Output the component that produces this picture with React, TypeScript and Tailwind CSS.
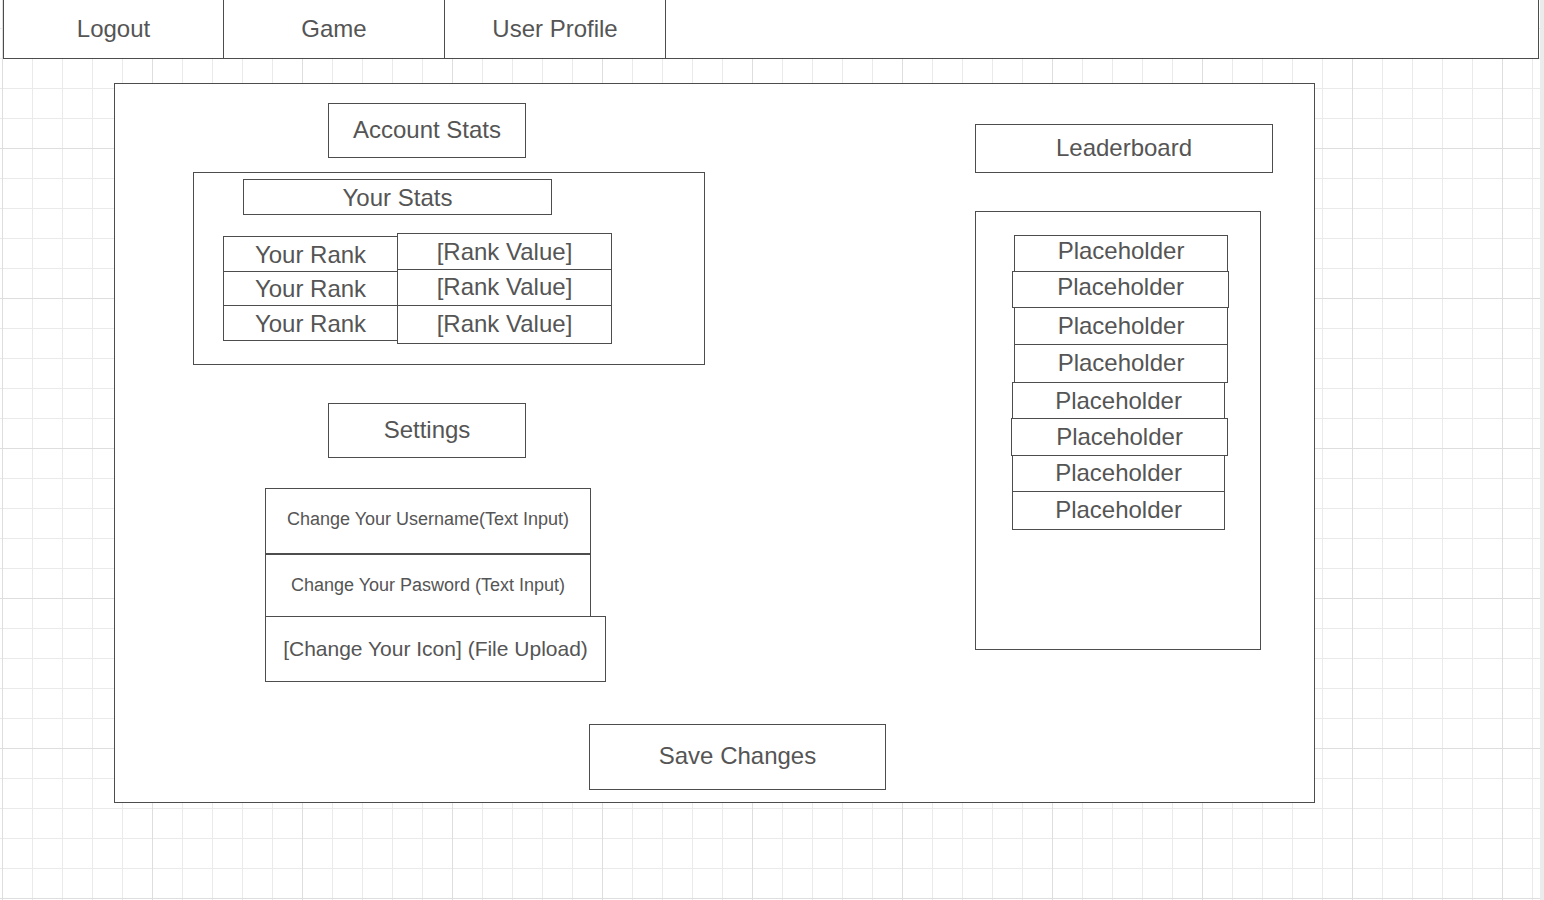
import React from 'react';

const navItems = [
    { label: 'Logout', w: 'w-[220px]' },
    { label: 'Game', w: 'w-[221px]' },
    { label: 'User Profile', w: 'w-[221px]' },
];

// each row: left offset inside the list box, width, height; rows share borders
const leaderRows = [
    'ml-[38px] w-[214px] h-[37px] pb-[5px]',
    'ml-[36px] w-[217px] h-[37px] -mt-px pb-[5px]',
    'ml-[38px] w-[214px] h-[38px] -mt-px pb-[1px]',
    'ml-[38px] w-[214px] h-[39px] -mt-px pb-[1px]',
    'ml-[36px] w-[213px] h-[37px] -mt-px',
    'ml-[35px] w-[217px] h-[38px] -mt-px pb-[1px]',
    'ml-[36px] w-[213px] h-[37px] -mt-px pb-[1px]',
    'ml-[36px] w-[213px] h-[39px] -mt-px pb-[1px]',
];

const box = 'flex items-center justify-center border border-[#4d4d4d] bg-white';

const App: React.FC = () => {
    return (
        <div className="flex w-[1544px] h-[900px] bg-[#ebebeb] font-['Liberation_Sans',Arial,sans-serif] text-[#555555] text-[24px] leading-none">
            {/* draw.io style canvas */}
            <div className="w-[1540px] h-[900px] bg-white bg-[linear-gradient(to_right,#dedede_1px,transparent_1px),linear-gradient(to_bottom,#dedede_1px,transparent_1px),linear-gradient(to_right,#eaeaea_1px,transparent_1px),linear-gradient(to_bottom,#eaeaea_1px,transparent_1px)] bg-[size:150px_150px,150px_150px,30px_30px,30px_30px] bg-[position:2px_-2px]">

                {/* Top nav */}
                <div className="ml-[3px] flex w-[1536px] h-[59px] border-x border-b border-[#4d4d4d] bg-white">
                    {navItems.map(item => (
                        <div key={item.label} className={`flex items-center justify-center border-r border-[#4d4d4d] ${item.w}`}>
                            {item.label}
                        </div>
                    ))}
                </div>

                {/* Main panel */}
                <div className="ml-[114px] mt-[24px] flex flex-col w-[1201px] h-[720px] border border-[#4d4d4d] bg-white">
                    <div className="flex">
                        {/* Left column */}
                        <div className="flex flex-col w-[620px]">
                            <div className={`${box} ml-[213px] mt-[19px] w-[198px] h-[55px] pb-[2px]`}>Account Stats</div>

                            <div className="ml-[78px] mt-[14px] flex flex-col w-[512px] h-[193px] border border-[#4d4d4d]">
                                <div className={`${box} ml-[49px] mt-[6px] w-[309px] h-[36px] pt-[2px]`}>Your Stats</div>

                                <div className="ml-[29px] mt-[18px] flex items-start">
                                    <div className="mt-[3px] flex flex-col w-[175px] border border-[#4d4d4d]">
                                        <div className="flex items-center justify-center h-[34px] pt-[2px]">Your Rank</div>
                                        <div className="flex items-center justify-center h-[34px] border-t border-[#4d4d4d]">Your Rank</div>
                                        <div className="flex items-center justify-center h-[35px] border-t border-[#4d4d4d] pt-[2px]">Your Rank</div>
                                    </div>
                                    <div className="-ml-px flex flex-col w-[215px] border border-[#4d4d4d]">
                                        <div className="flex items-center justify-center h-[35px]">[Rank Value]</div>
                                        <div className="flex items-center justify-center h-[36px] border-t border-[#4d4d4d] pb-[2px]">[Rank Value]</div>
                                        <div className="flex items-center justify-center h-[38px] border-t border-[#4d4d4d] pb-[2px]">[Rank Value]</div>
                                    </div>
                                </div>
                            </div>

                            <div className={`${box} ml-[213px] mt-[38px] w-[198px] h-[55px] pb-[2px]`}>Settings</div>

                            <div className={`${box} ml-[150px] mt-[30px] w-[326px] h-[66px] text-[18px] pb-[4px]`}>Change Your Username(Text Input)</div>
                            <div className={`${box} ml-[150px] w-[326px] h-[63px] text-[18px] pb-[2px]`}>Change Your Pasword (Text Input)</div>
                            <div className={`${box} ml-[150px] -mt-px w-[341px] h-[66px] text-[21px] pb-[2px]`}>[Change Your Icon] (File Upload)</div>
                        </div>

                        {/* Right column */}
                        <div className="ml-[240px] flex flex-col">
                            <div className={`${box} mt-[40px] w-[298px] h-[49px] pb-[2px]`}>Leaderboard</div>
                            <div className="mt-[38px] flex flex-col w-[286px] h-[439px] border border-[#4d4d4d]">
                                <div className="mt-[23px] flex flex-col">
                                    {leaderRows.map((cls, i) => (
                                        <div key={i} className={`${box} ${cls}`}>Placeholder</div>
                                    ))}
                                </div>
                            </div>
                        </div>
                    </div>

                    <div className={`${box} ml-[474px] mt-[42px] w-[297px] h-[66px] pb-[2px]`}>Save Changes</div>
                </div>
            </div>
            <div className="flex-1" />
        </div>
    );
};

export default App;
